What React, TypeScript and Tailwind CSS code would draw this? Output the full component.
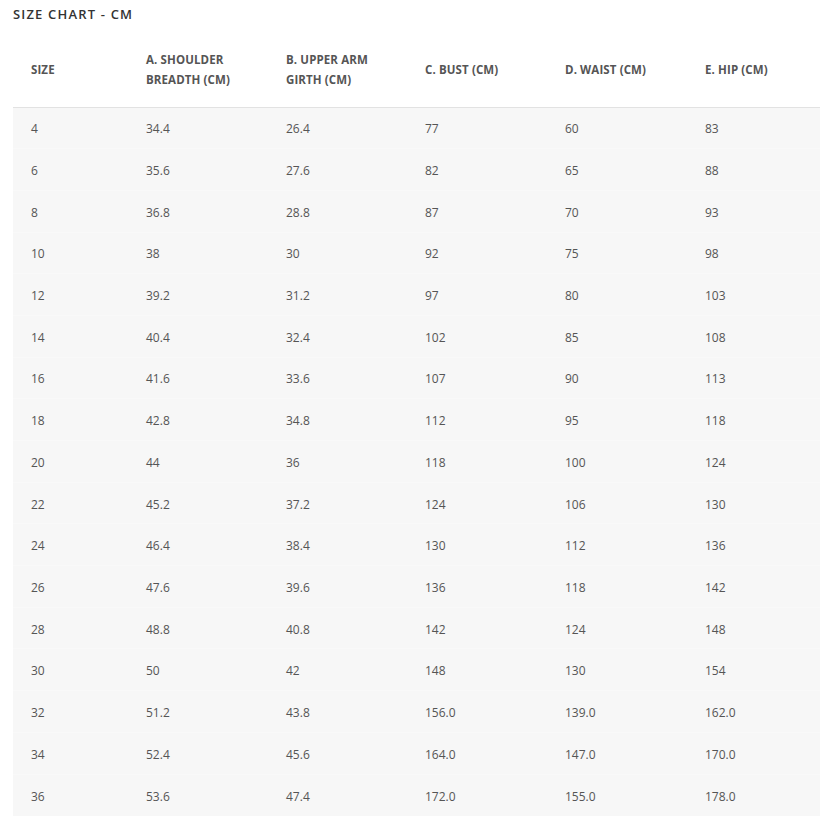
const headers = [
  ["SIZE"],
  ["A. SHOULDER", "BREADTH (CM)"],
  ["B. UPPER ARM", "GIRTH (CM)"],
  ["C. BUST (CM)"],
  ["D. WAIST (CM)"],
  ["E. HIP (CM)"],
];

const rows = [
  ["4", "34.4", "26.4", "77", "60", "83"],
  ["6", "35.6", "27.6", "82", "65", "88"],
  ["8", "36.8", "28.8", "87", "70", "93"],
  ["10", "38", "30", "92", "75", "98"],
  ["12", "39.2", "31.2", "97", "80", "103"],
  ["14", "40.4", "32.4", "102", "85", "108"],
  ["16", "41.6", "33.6", "107", "90", "113"],
  ["18", "42.8", "34.8", "112", "95", "118"],
  ["20", "44", "36", "118", "100", "124"],
  ["22", "45.2", "37.2", "124", "106", "130"],
  ["24", "46.4", "38.4", "130", "112", "136"],
  ["26", "47.6", "39.6", "136", "118", "142"],
  ["28", "48.8", "40.8", "142", "124", "148"],
  ["30", "50", "42", "148", "130", "154"],
  ["32", "51.2", "43.8", "156.0", "139.0", "162.0"],
  ["34", "52.4", "45.6", "164.0", "147.0", "170.0"],
  ["36", "53.6", "47.4", "172.0", "155.0", "178.0"],
];

const colWidths = ["w-[115px]", "w-[140px]", "w-[139px]", "w-[140px]", "w-[140px]", "w-auto"];

export default function App() {
  return (
    <div className="min-h-screen bg-white overflow-hidden font-['Open_Sans',sans-serif] text-[#555]">
      <div className="pl-[13px]">
        <h2 className="h-[32px] pt-[4px] text-[13px] leading-5 font-semibold tracking-[0.09em] text-[#333]">
          SIZE CHART - CM
        </h2>
        <table className="w-[807px] table-fixed border-collapse">
          <colgroup>
            {colWidths.map((w, i) => (
              <col key={i} className={w} />
            ))}
          </colgroup>
          <thead>
            <tr className="h-[75px] border-b border-[#e2e2e2]">
              {headers.map((h, i) => (
                <th
                  key={i}
                  className="px-[18px] pt-[2px] text-left align-middle text-[11.5px] leading-5 font-bold tracking-[0.01em] text-[#555]"
                >
                  {h.map((line) => (
                    <div key={line}>{line}</div>
                  ))}
                </th>
              ))}
            </tr>
          </thead>
          <tbody className="bg-[#f7f7f7]">
            {rows.map((r) => (
              <tr key={r[0]} className="h-[41.7px] border-b border-[#f9f9f9] last:border-b-0">
                {r.map((v, i) => (
                  <td key={i} className="px-[18px] pt-[3px] text-[12px] text-[#555] align-middle">
                    {v}
                  </td>
                ))}
              </tr>
            ))}
          </tbody>
        </table>
      </div>
    </div>
  );
}
